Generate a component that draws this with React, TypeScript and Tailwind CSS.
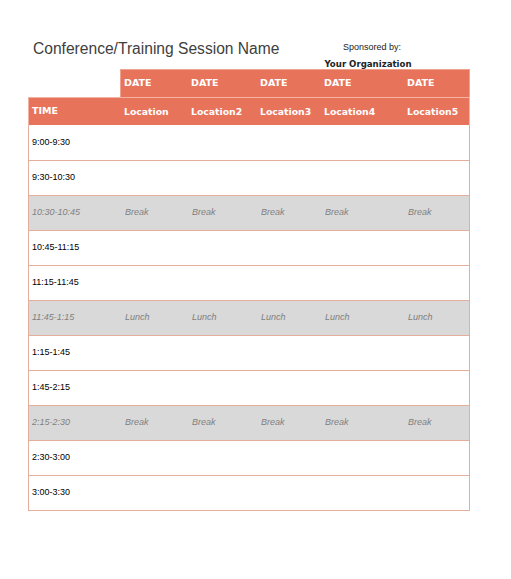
import React from 'react'

const cols = 'grid grid-cols-[92px_67px_69px_64px_83px_67px]'

type Row = { time: string; label?: string }

const rows: Row[] = [
  { time: '9:00-9:30' },
  { time: '9:30-10:30' },
  { time: '10:30-10:45', label: 'Break' },
  { time: '10:45-11:15' },
  { time: '11:15-11:45' },
  { time: '11:45-1:15', label: 'Lunch' },
  { time: '1:15-1:45' },
  { time: '1:45-2:15' },
  { time: '2:15-2:30', label: 'Break' },
  { time: '2:30-3:00' },
  { time: '3:00-3:30' },
]

const locations = ['Location', 'Location2', 'Location3', 'Location4', 'Location5']

export default function App() {
  return (
    <div className="w-[511px] h-[579px] bg-white font-['Liberation_Sans',Arial,sans-serif]">
      <div className="pt-[39px] pl-[33px] flex items-start">
        <h1 className="text-[15.6px] leading-[20px] text-[#404040] w-[300px]">
          Conference/Training Session Name
        </h1>
        <div className="flex flex-col items-center w-[100px] -ml-[15px] pt-[2px]">
          <span className="text-[9px] leading-[12px] text-[#222] pl-[8px]">Sponsored by:</span>
          <span className="text-[8.6px] leading-[12px] font-bold text-[#222] mt-[5px] font-['DejaVu_Sans',Verdana,sans-serif]">
            Your Organization
          </span>
        </div>
      </div>

      <div className="ml-[28px] w-[442px] mt-[-1px]">
        {/* date header row */}
        <div className={cols}>
          <div />
          <div className="col-span-5 grid grid-cols-[67px_69px_64px_83px_67px] h-[28px] bg-[#e8735b] border-l border-t border-r border-[#f1a28f]">
            {locations.map((l) => (
              <div
                key={l}
                className="flex items-center pl-[3px] text-white font-bold text-[9.5px] font-['DejaVu_Sans',Verdana,sans-serif]"
              >
                DATE
              </div>
            ))}
          </div>
        </div>

        {/* location header row */}
        <div className={`${cols} h-[28px] bg-[#e8735b] border-t border-x border-[#f4b3a3]`}>
          <div className="flex items-center pl-[3px] text-white font-bold text-[9.5px] font-['DejaVu_Sans',Verdana,sans-serif]">
            TIME
          </div>
          {locations.map((l) => (
            <div
              key={l}
              className="flex items-center pl-[3px] text-white font-bold text-[9.3px] font-['DejaVu_Sans',Verdana,sans-serif]"
            >
              {l}
            </div>
          ))}
        </div>

        {/* time rows */}
        <div className="border-x border-b border-[#e4ae9c]">
          {rows.map((r, i) => (
            <div
              key={r.time}
              className={`${cols} h-[35px] items-center ${i > 0 ? 'border-t border-[#e4ae9c]' : ''} ${
                r.label ? 'bg-[#d9d9d9]' : 'bg-white'
              }`}
            >
              {r.label ? (
                <>
                  <div className="pl-[3px] text-[9px] italic text-[#808080]">{r.time}</div>
                  {locations.map((l) => (
                    <div key={l} className="pl-[4px] text-[9px] italic text-[#808080]">
                      {r.label}
                    </div>
                  ))}
                </>
              ) : (
                <>
                  <div className="pl-[3px] text-[9px] text-black">{r.time}</div>
                  {locations.map((l) => (
                    <div key={l} />
                  ))}
                </>
              )}
            </div>
          ))}
        </div>
      </div>
    </div>
  )
}
